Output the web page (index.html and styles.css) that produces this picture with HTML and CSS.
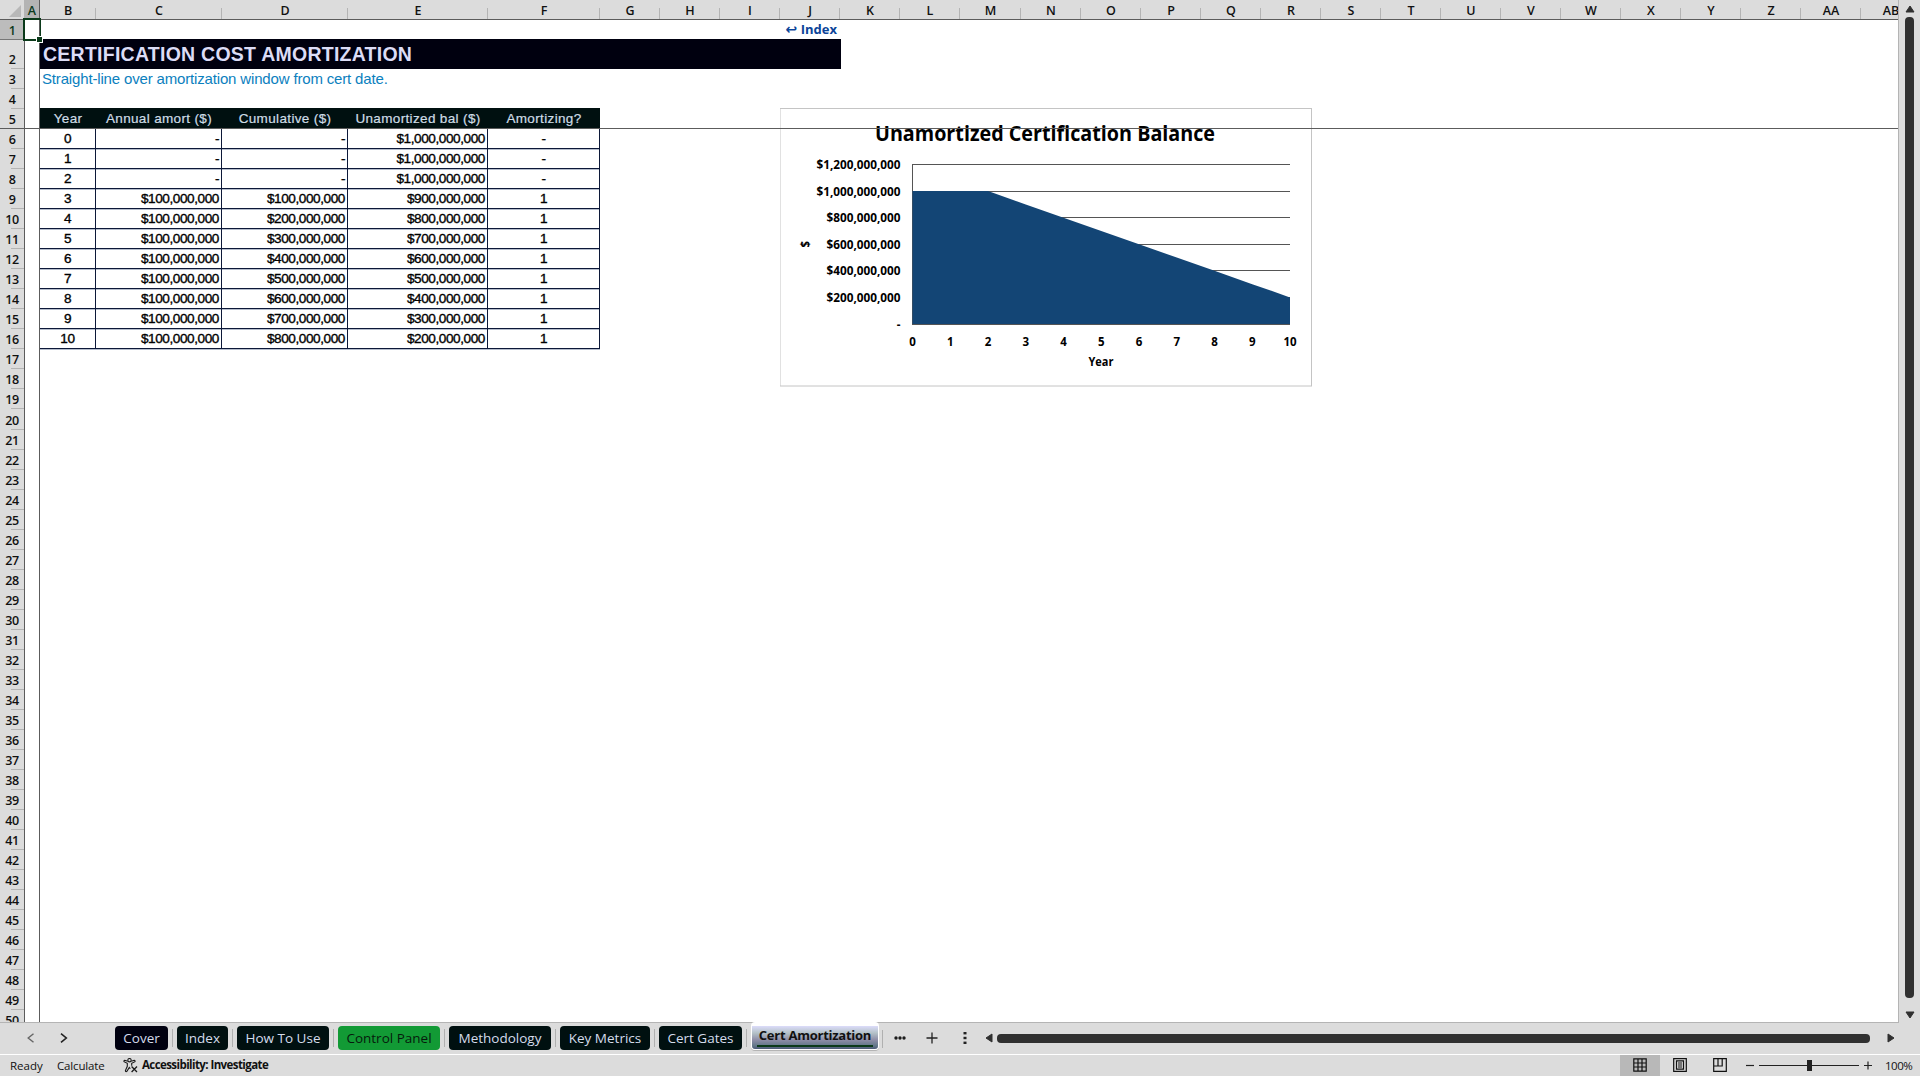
FILE: index.html
```html
<!DOCTYPE html>
<html lang="en">
<head>
  <meta charset="UTF-8" />
  <meta name="viewport" content="width=device-width, initial-scale=1.0"/>
  <title>Cert Amortization</title>
  <link rel="stylesheet" href="styles.css">
</head>
<body>

  <div class="workbook">
    <div class="main">
      <div class="grid-area">
        <div class="col-header">
          <div class="corner"><svg width="12" height="12" viewBox="0 0 12 12"><path d="M12 0V12H0Z" fill="#b8b8b8"/></svg></div>
          <div class="cols" id="cols"></div>
        </div>
        <div class="body-row">
          <div class="row-header" id="rows"></div>
          <div class="frozen-col"></div>
          <div class="cells">
            <div class="row-link"><a class="index-link"><span class="arrow">↩</span> Index</a></div>
            <div class="title"><span>CERTIFICATION COST AMORTIZATION</span></div>
            <div class="subtitle"><span>Straight-line over amortization window from cert date.</span></div>
            <table class="amort">
              <colgroup><col class="w-b"><col class="w-c"><col class="w-d"><col class="w-e"><col class="w-f"></colgroup>
              <thead>
                <tr><th>Year</th><th>Annual amort ($)</th><th>Cumulative ($)</th><th>Unamortized bal ($)</th><th>Amortizing?</th></tr>
              </thead>
              <tbody id="amortBody"></tbody>
            </table>
          </div>
        </div>

        <!-- floating chart -->
        <svg class="chart" width="532" height="279" viewBox="780 108 532 279">
          <rect x="780" y="108.5" width="531.5" height="277.5" fill="#fff" stroke="#c4c4c4"/>
          <text class="chart-title" x="875" y="141" textLength="340" lengthAdjust="spacingAndGlyphs">Unamortized Certification Balance</text>
          <g id="chartPlot"></g>
          <text class="axis" x="1088.5" y="365.5" textLength="25" lengthAdjust="spacingAndGlyphs">Year</text>
          <text class="axis" transform="translate(809.5 247.5) rotate(-90)">$</text>
        </svg>

        <div class="freeze-line"></div>
        <div class="selection"></div>
      </div>

      <div class="vscroll">
        <svg width="10" height="8" viewBox="0 0 10 8"><path d="M5 1L9 7H1Z" fill="#303030" stroke="#303030" stroke-linejoin="round"/></svg>
        <div class="vthumb"></div>
        <svg class="down" width="10" height="8" viewBox="0 0 10 8"><path d="M5 7L9 1H1Z" fill="#303030" stroke="#303030" stroke-linejoin="round"/></svg>
      </div>
    </div>

    <div class="tabbar">
      <div class="nav">
        <svg width="8" height="10" viewBox="0 0 8 10"><path d="M6.5 .7L1.2 5L6.5 9.3" fill="none" stroke="#666" stroke-width="1.4"/></svg>
        <svg width="8" height="10" viewBox="0 0 8 10"><path d="M1 .7L6.3 5L1 9.3" fill="none" stroke="#222" stroke-width="1.6"/></svg>
      </div>
      <div class="tabs" id="tabs"></div>
      <div class="tab-tools">
        <svg width="12" height="12" viewBox="0 0 12 12" fill="#1c1c1c"><circle cx="2" cy="6" r="1.7"/><circle cx="6" cy="6" r="1.7"/><circle cx="10" cy="6" r="1.7"/></svg>
        <svg class="add" width="12" height="12" viewBox="0 0 12 12"><path d="M6 .5V11.5M.5 6H11.5" stroke="#222" stroke-width="1.3"/></svg>
        <svg width="4" height="12" viewBox="0 0 4 12" fill="#222"><rect x=".5" y="0" width="3" height="2.4"/><rect x=".5" y="4.8" width="3" height="2.4"/><rect x=".5" y="9.6" width="3" height="2.4"/></svg>
      </div>
      <div class="hscroll">
        <svg width="8" height="10" viewBox="0 0 8 10"><path d="M1 5L7 1V9Z" fill="#303030" stroke="#303030" stroke-linejoin="round"/></svg>
        <div class="hthumb"></div>
        <svg class="right" width="8" height="10" viewBox="0 0 8 10"><path d="M7 5L1 1V9Z" fill="#303030" stroke="#303030" stroke-linejoin="round"/></svg>
      </div>
    </div>

    <div class="status">
      <span class="st-ready">Ready</span>
      <span class="st-calc">Calculate</span>
      <svg class="acc-icon" width="15" height="15" viewBox="0 0 15 15" fill="none" stroke="#1a1a1a" stroke-width="1.1">
        <circle cx="6.5" cy="2.2" r="1.7"/>
        <path d="M4.7 3.2L1.8 2.3Q.6 2.4 1 3.7L4.3 5.3V8.3L2.4 12.6Q2.6 14.2 3.9 13.4L6.3 9.4L7.3 10.8M8.3 3.2L11.2 2.3Q12.4 2.4 12 3.7L8.7 5.3V7.7"/>
        <path d="M8.6 8.5L14 14M14 8.5L8.6 14" stroke-width="1.3"/>
      </svg>
      <span class="st-acc">Accessibility: Investigate</span>
      <div class="views">
        <div class="view on"><svg width="14" height="14" viewBox="0 0 14 14" fill="none" stroke="#111" stroke-width="1.2"><path d="M.8 .8H13.2V13.2H.8ZM.8 5H13.2M.8 9H13.2M5 .8V13.2M9 .8V13.2"/></svg></div>
        <div class="view"><svg width="14" height="14" viewBox="0 0 14 14" fill="none" stroke="#111" stroke-width="1.2"><path d="M.7 .7H13.3V13.3H.7ZM3.5 2.8H10.5V11.2H3.5ZM5 5H9M5 7H9M5 9H9"/></svg></div>
        <div class="view"><svg width="14" height="14" viewBox="0 0 14 14" fill="none" stroke="#111" stroke-width="1.2"><path d="M.7 .7H13.3V13.3H.7ZM.7 8H9.2V.7M5 .7V8"/></svg></div>
      </div>
      <div class="zoom">
        <svg width="8" height="9" viewBox="0 0 8 9"><path d="M0 4.5H8" stroke="#222" stroke-width="1.2"/></svg>
        <div class="slider"><div class="knob"></div></div>
        <svg width="8" height="9" viewBox="0 0 8 9"><path d="M0 4.5H8M4 .5V8.5" stroke="#222" stroke-width="1.2"/></svg>
      </div>
      <span class="st-zoom">100%</span>
    </div>
  </div>

  <script src="script.js"></script>
</body>
</html>
```
FILE: styles.css
```css
* {
  box-sizing: border-box;
}

body {
  margin: 0;
  background: #dcdcdc;
  font-family: "Open Sans", "Noto Sans", sans-serif;
  color: #111;
  overflow: hidden;
}

svg {
  display: block;
  flex-shrink: 0;
}

.workbook {
  width: 1920px;
  height: 1076px;
  display: flex;
  flex-direction: column;
}

.main {
  height: 1023px;
  display: flex;
}

/* sheet */
.grid-area {
  position: relative;
  width: 1899px;
  height: 1023px;
  overflow: hidden;
  background: #fff;
  border-right: 1px solid #b4b4b4;
  border-bottom: 1px solid #b4b4b4;
}

.col-header {
  display: flex;
  height: 20px;
  background: #dcdcdc;
  border-bottom: 1px solid #5c5c5c;
}

.corner {
  width: 25px;
  padding: 5px 0 0 9px;
  flex-shrink: 0;
  border-right: 1px solid #b4b4b4;
}

.cols {
  display: flex;
}

.col {
  flex-shrink: 0;
  font-size: 12.5px;
  font-weight: 600;
  line-height: 21px;
  text-align: center;
  background: linear-gradient(#b4b4b4, #b4b4b4) right bottom / 1px 11px no-repeat;
}

.col.active {
  background: #b4b4b4;
  color: #0d3a1c;
  border-right: 1px solid #5c5c5c;
}

.body-row {
  display: flex;
}

.row-header {
  width: 25px;
  background: #dcdcdc;
  border-right: 1px solid #5c5c5c;
}

.row {
  display: flex;
  align-items: flex-end;
  justify-content: center;
  font-size: 12.5px;
  font-weight: 600;
  line-height: 18px;
  letter-spacing: -0.4px;
  background: linear-gradient(#b4b4b4, #b4b4b4) right bottom / 13px 1px no-repeat;
}

.row.active {
  background: #bcbcbc;
  color: #0d3a1c;
  border-bottom: 1px solid #777;
  line-height: 17px;
}

.frozen-col {
  width: 15px;
  border-right: 1px solid #5c5c5c;
}

.cells {
  font-family: "Liberation Sans", Arial, sans-serif;
}

.row-link {
  width: 800px;
  height: 19px;
  padding-right: 3px;
  text-align: right;
  line-height: 17px;
}

.index-link {
  font-family: "Open Sans", sans-serif;
  font-size: 13px;
  font-weight: 700;
  color: #0b4499;
}

.arrow {
  font-family: "DejaVu Sans", sans-serif;
  font-size: 14px;
}

.title {
  width: 801px;
  height: 30px;
  padding-left: 3px;
  background: #00000f;
  color: #dcdcf6;
  font-size: 19.5px;
  font-weight: 700;
  line-height: 30px;
  letter-spacing: 0.25px;
}

.subtitle {
  height: 39px;
  padding-left: 2px;
  color: #0b80be;
  font-size: 15px;
  letter-spacing: -0.16px;
  line-height: 20px;
}

.amort {
  width: 560px;
  table-layout: fixed;
  border-collapse: separate;
  border-spacing: 0;
}

.w-b { width: 56px; }
.w-c { width: 126px; }
.w-d { width: 126px; }
.w-e { width: 140px; }
.w-f { width: 112px; }

.amort th {
  height: 21px;
  padding: 0;
  background: #001010;
  color: #cfdde6;
  font-size: 13.5px;
  font-weight: 400;
  letter-spacing: 0.35px;
  line-height: 20px;
  -webkit-text-stroke: 0.2px #cfdde6;
}

.amort td {
  height: 20px;
  padding: 0 2px 0 0;
  font-size: 13.6px;
  line-height: 19px;
  letter-spacing: -0.42px;
  text-align: right;
  color: #000;
  -webkit-text-stroke: 0.35px #000;
  border-right: 1px solid #0c1838;
  border-bottom: 1px solid #0c1838;
  box-shadow: 0 1px 0 #b4bccb;
}

.amort td:first-child,
.amort td:last-child {
  padding: 0;
  text-align: center;
}

.freeze-line {
  position: absolute;
  left: 0;
  top: 128px;
  width: 100%;
  height: 1px;
  background: #5c5c5c;
}

.selection {
  position: absolute;
  left: 23px;
  top: 18px;
  width: 18px;
  height: 23px;
  border: 2px solid #0b3a1a;
  border-right-width: 1px;
}

.selection::after {
  content: "";
  position: absolute;
  right: -2px;
  bottom: -3px;
  width: 5px;
  height: 5px;
  background: #0b3a1a;
  outline: 1px solid #fff;
}

/* chart */
.chart {
  position: absolute;
  left: 780px;
  top: 108px;
}

.chart text {
  font-family: "Open Sans", sans-serif;
  font-weight: 700;
  fill: #000;
}

.chart .chart-title {
  font-size: 20.5px;
}

.chart .axis {
  font-size: 11.5px;
}

/* scrollbars */
.vscroll {
  width: 21px;
  padding: 5px 0 0 6px;
}

.vthumb {
  width: 9px;
  height: 981px;
  margin: 4px 0 13px;
  border-radius: 4px;
  background: #303030;
}

.hscroll {
  display: flex;
  align-items: center;
}

.hthumb {
  width: 873px;
  height: 9px;
  margin: 0 17px 0 4px;
  border-radius: 4px;
  background: #303030;
}

/* sheet tabs */
.tabbar {
  display: flex;
  align-items: center;
  height: 31px;
  padding-bottom: 1px;
}

.nav {
  display: flex;
  gap: 25px;
  width: 115px;
  padding-left: 27px;
}

.tabs {
  display: flex;
  height: 30px;
}

.tab {
  height: 24px;
  margin: 3px 9px 0 0;
  border-radius: 4px;
  background: #001010;
  color: #d5dcec;
  font-size: 13.5px;
  line-height: 25px;
  text-align: center;
  white-space: nowrap;
  position: relative;
}

.tab::after {
  content: "";
  position: absolute;
  left: calc(100% + 4px);
  top: 3px;
  width: 1px;
  height: 18px;
  background: #b0b0b0;
}

.tab.cover {
  background: #00000f;
}

.tab.green {
  background: #129a35;
  color: #061a0c;
}

.tab.active {
  height: 28px;
  margin: -1px 15px 0 0;
  border: 1px solid #fff;
  border-top: 4px solid #fff;
  box-shadow: 0 1px 0 #b4b4b4;
  background: linear-gradient(#dcdcfa, #b4c2c8 30%, #8e8ea8 60%, #64788a 85%, #4c5a78);
  color: #111;
  font-size: 13px;
  font-weight: 700;
  letter-spacing: -0.25px;
  line-height: 19px;
}

.tab.active::after {
  top: 4px;
}

.tab.active span {
  display: block;
  height: 21px;
  margin: 0 5px;
  border-bottom: 2px solid #0b3a1a;
}

.tab-tools {
  display: flex;
  align-items: center;
  width: 91px;
}

.add {
  margin: 0 25px 0 20px;
}

/* status bar */
.status {
  display: flex;
  align-items: center;
  height: 22px;
  border-top: 1px solid #fff;
  font-size: 11.5px;
  line-height: 20px;
}

.st-ready {
  width: 47px;
  margin-left: 10px;
}

.st-calc {
  width: 66px;
  letter-spacing: -0.15px;
}

.st-acc {
  width: 1478px;
  height: 21px;
  margin-left: 4px;
  font-weight: 700;
  letter-spacing: -0.58px;
}

.views {
  display: flex;
  height: 21px;
}

.view {
  display: flex;
  align-items: center;
  justify-content: center;
  width: 40px;
  padding-bottom: 2px;
}

.view.on {
  background: #b8b8b8;
}

.zoom {
  display: flex;
  align-items: center;
  gap: 5px;
  margin-left: 6px;
}

.slider {
  display: flex;
  align-items: center;
  width: 100px;
  height: 11px;
  padding-left: 48px;
  background: linear-gradient(#222, #222) left center / 100% 1px no-repeat;
}

.knob {
  width: 5px;
  height: 11px;
  background: #222;
}

.st-zoom {
  margin-left: 13px;
  letter-spacing: -0.5px;
}
```
FILE: script.js
```js
const widths = { A: 15, B: 56, C: 126, D: 126, E: 140, F: 112, M: 61 };
const cols = document.getElementById('cols');

for (let i = 0; i < 28; i++) {
  const name = i < 26 ? String.fromCharCode(65 + i) : 'A' + String.fromCharCode(39 + i);
  const col = document.createElement('div');
  col.className = name === 'A' ? 'col active' : 'col';
  col.style.width = (widths[name] || 60) + 'px';
  col.textContent = name;
  cols.appendChild(col);
}

const heights = { 2: 29, 20: 21 };
const rows = document.getElementById('rows');

for (let r = 1; r <= 50; r++) {
  const row = document.createElement('div');
  row.className = r === 1 ? 'row active' : 'row';
  row.style.height = (heights[r] || 20) + 'px';
  row.textContent = r;
  rows.appendChild(row);
}

// amortization table
const fmt = (n) => (n ? '$' + n.toLocaleString('en-US') : '-');
const body = document.getElementById('amortBody');
const balances = [];

for (let y = 0; y <= 10; y++) {
  const annual = y > 2 ? 100000000 : 0;
  const cumulative = Math.max(0, y - 2) * 100000000;
  const balance = 1000000000 - cumulative;
  balances.push(balance);
  const tr = document.createElement('tr');
  [y, fmt(annual), fmt(cumulative), fmt(balance), annual ? 1 : '-'].forEach((v) => {
    const td = document.createElement('td');
    td.textContent = v;
    tr.appendChild(td);
  });
  body.appendChild(tr);
}

// chart
const left = 912.5, right = 1290, top0 = 164.5, bottom = 324;
const px = (y) => left + (right - left) * y / 10;
const py = (v) => bottom - (bottom - top0) * v / 1200000000;
let svg = '';

for (let v = 0; v <= 1200000000; v += 200000000) {
  const y = Math.floor(py(v)) + 0.5;
  svg += `<path d="M${left} ${y}H${right}" stroke="#555"/>`;
  const len = v >= 1000000000 ? 84 : 74;
  svg += v
    ? `<text class="axis" x="${900.5 - len}" y="${y + 4}" textLength="${len}" lengthAdjust="spacingAndGlyphs">${fmt(v)}</text>`
    : `<text class="axis" x="900.5" y="${y + 4}" text-anchor="end">-</text>`;
}
svg += `<path d="M${left} 164V325" stroke="#555"/>`;
const points = balances.map((b, y) => `${px(y)},${py(b)}`).join(' ');
svg += `<polygon points="${left},${bottom} ${points} ${right},${bottom}" fill="#134575"/>`;
for (let y = 0; y <= 10; y++) {
  svg += `<text class="axis" x="${px(y)}" y="345.5" text-anchor="middle">${y}</text>`;
}
document.getElementById('chartPlot').innerHTML = svg;

// sheet tabs
const tabs = [
  ['Cover', 53, 'cover'],
  ['Index', 51],
  ['How To Use', 92],
  ['Control Panel', 102, 'green'],
  ['Methodology', 102],
  ['Key Metrics', 90],
  ['Cert Gates', 83],
  ['Cert Amortization', 128, 'active']
];

tabs.forEach(([name, width, cls]) => {
  const tab = document.createElement('div');
  tab.className = 'tab ' + (cls || '');
  tab.style.width = width + 'px';
  tab.innerHTML = `<span>${name}</span>`;
  document.getElementById('tabs').appendChild(tab);
});
```
